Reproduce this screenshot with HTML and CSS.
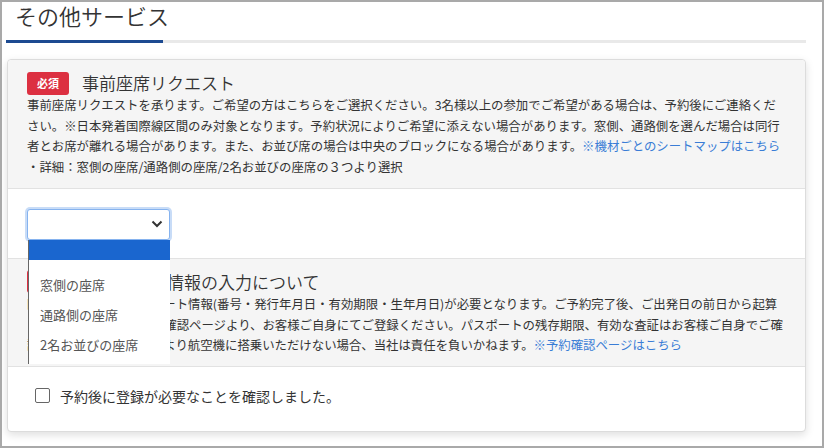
FILE: index.html
```html
<!DOCTYPE html>
<html lang="ja">
    <head>
        <meta charset="utf-8">
        <title>その他サービス</title>
        <meta name="viewport" content="width=device-width, initial-scale=1.0">
        <link rel="stylesheet" href="styles.css">
    </head>

    <body>
        <div class="frame">
            <div class="services">
                <h2 class="services-title">その他サービス</h2>
                <div class="title-line"></div>

                <div class="card">
                    <div class="card-info">
                        <div class="info-head">
                            <span class="badge">必須</span>
                            <h3>事前座席リクエスト</h3>
                        </div>
                        <p class="info-text">事前座席リクエストを承ります。ご希望の方はこちらをご選択ください。3名様以上の参加でご希望がある場合は、予約後にご連絡ください。※日本発着国際線区間のみ対象となります。予約状況によりご希望に添えない場合があります。窓側、通路側を選んだ場合は同行者とお席が離れる場合があります。また、お並び席の場合は中央のブロックになる場合があります。<a href="#">※機材ごとのシートマップはこちら</a></p>
                        <p class="info-text">・詳細：窓側の座席/通路側の座席/2名お並びの座席の３つより選択</p>
                    </div>

                    <div class="card-field">
                        <div class="select-wrap">
                            <div class="select-box">
                                <svg class="chevron" width="12" height="8" viewBox="0 0 12 8"><path d="M1.5 1.5 L6 6 L10.5 1.5" fill="none" stroke="#333" stroke-width="2"/></svg>
                            </div>
                            <ul class="select-menu">
                                <li class="selected"></li>
                                <li>窓側の座席</li>
                                <li>通路側の座席</li>
                                <li>2名お並びの座席</li>
                            </ul>
                        </div>
                    </div>

                    <div class="card-info">
                        <div class="info-head">
                            <span class="badge">必須</span>
                            <h3>パスポート情報の入力について</h3>
                        </div>
                        <p class="info-text">国際線ご搭乗にはパスポート情報(番号・発行年月日・有効期限・生年月日)が必要となります。ご予約完了後、ご出発日の前日から起算して72時間前までに予約確認ページより、お客様ご自身にてご登録ください。パスポートの残存期限、有効な査証はお客様ご自身でご確認ください。書類不備により航空機に搭乗いただけない場合、当社は責任を負いかねます。<a href="#">※予約確認ページはこちら</a></p>
                    </div>

                    <div class="card-field confirm">
                        <label class="check"><span class="check-box"></span>予約後に登録が必要なことを確認しました。</label>
                    </div>
                </div>
            </div>
        </div>
    </body>
</html>
```

FILE: styles.css
```css
html, body {
    margin: 0;
    padding: 0;
}
body {
    font-family: "Noto Sans CJK JP", "Noto Sans", sans-serif;
    color: #333;
    background: #fff;
}
.frame {
    box-sizing: border-box;
    width: 824px;
    height: 448px;
    border: 2px solid #a9a9a9;
    padding: 0 16px 0 4px;
    overflow: hidden;
}
.services-title {
    margin: 0;
    padding: 0 0 0 9px;
    height: 38px;
    font-size: 22px;
    font-weight: 350;
    line-height: 27px;
    color: #333;
}
.title-line {
    height: 3px;
    background: linear-gradient(to right, #1c4a91 157px, #e9e9e9 157px);
}
.card {
    margin: 16px 0 0 1px;
    border: 1px solid #dcdcdc;
    border-radius: 4px;
    box-shadow: 0 3px 8px rgba(0,0,0,.13);
    background: #fff;
}
.card-info {
    background: #f5f5f5;
    padding: 11px 18px 10px 19px;
    border-bottom: 1px solid #e2e2e2;
}
.card-info:first-child { border-radius: 4px 4px 0 0; }
.info-head {
    display: flex;
    align-items: center;
    gap: 13px;
    height: 24px;
}
.badge {
    display: inline-block;
    background: #dc3041;
    color: #fff;
    font-size: 11px;
    font-weight: bold;
    line-height: 23px;
    padding: 0 10px;
    border-radius: 3px;
}
.info-head h3 {
    margin: 0;
    font-size: 17px;
    font-weight: 350;
    line-height: 22px;
}
.info-text {
    margin: 0;
    font-size: 12.4px;
    line-height: 20.7px;
}
.info-text a {
    color: #3a7dd6;
    text-decoration: none;
}
.card-field {
    padding: 20px 19px 18px;
    border-bottom: 1px solid #e2e2e2;
}
.select-wrap {
    position: relative;
    width: 143px;
}
.select-box {
    box-sizing: border-box;
    height: 31px;
    border: 1px solid #86b3ef;
    border-radius: 3px;
    box-shadow: 0 0 0 2px #c8dcf7;
    background: #fff;
    display: flex;
    align-items: center;
    justify-content: flex-end;
    padding-right: 6px;
}
.select-menu {
    position: absolute;
    top: 31px;
    left: 1px;
    width: 141px;
    margin: 0;
    padding: 0 0 4px;
    list-style: none;
    background: #fff;
    border-left: 1px solid #666;
    z-index: 5;
}
.select-menu li {
    height: 30px;
    line-height: 30px;
    padding-left: 11px;
    font-size: 13px;
    color: #555;
}
.select-menu li.selected {
    height: 20px;
    background: #1a66cf;
    margin-bottom: 10px;
}
.confirm {
    border-bottom: none;
    padding: 18px 27px 24px;
}
.check {
    display: flex;
    align-items: center;
    gap: 10px;
    font-size: 14px;
    line-height: 22px;
}
.check-box {
    box-sizing: border-box;
    width: 15px;
    height: 15px;
    border: 1px solid #666;
    border-radius: 2px;
    background: #fff;
}
```
